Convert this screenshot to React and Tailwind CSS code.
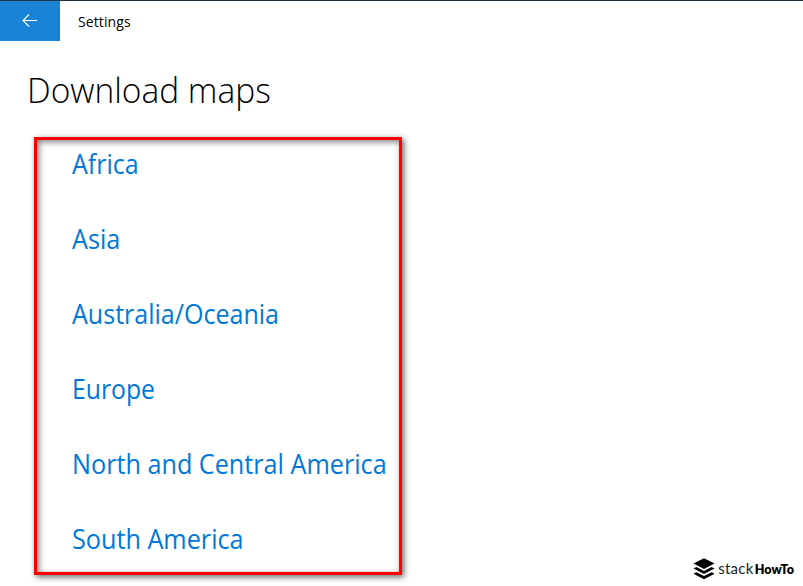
const regions = [
  { name: 'Africa', fit: 'scale-x-[0.943]' },
  { name: 'Asia', fit: 'scale-x-[0.950]' },
  { name: 'Australia/Oceania', fit: 'scale-x-[0.945]' },
  { name: 'Europe', fit: 'scale-x-[0.933]' },
  { name: 'North and Central America', fit: 'scale-x-[0.951]' },
  { name: 'South America', fit: 'scale-x-[0.951]' },
];

function BackArrow() {
  return (
    <svg width="16" height="14" viewBox="0 0 16 14" fill="none" stroke="white" strokeWidth="1.1">
      <path d="M15 6.500H1M7 0.500L1 6.500l6 6" />
    </svg>
  );
}

function StackLogo() {
  return (
    <svg width="22" height="22" viewBox="0 0 22 22" fill="black">
      <path d="M11 0.3L21.5 5.6 11 11 0.5 5.6z" />
      <path d="M0.5 10.6L3.4 9.1 11 13l7.600-3.900 2.900 1.500L11 16z" />
      <path d="M0.5 15.700L3.400 14.200 11 18.100l7.600-3.900 2.900 1.500L11 21.200z" />
    </svg>
  );
}

export default function App() {
  return (
    <div className="flex h-[586px] w-[803px] flex-col overflow-hidden border-t border-[#22303c] bg-white font-['Open_Sans',sans-serif] text-black">
      <header className="flex h-10 items-center">
        <button className="flex h-10 w-[60px] items-center justify-center bg-[#1883d7]" aria-label="Back">
          <BackArrow />
        </button>
        <span className="ml-[18px] whitespace-nowrap pt-[2px] text-[14px] leading-5 tracking-[0.1px]">Settings</span>
      </header>
      <h1 className="ml-[27px] mt-[25px] h-[48px] origin-left scale-x-[0.957] whitespace-nowrap text-[35px] font-light leading-[48px]">Download maps</h1>
      <div className="flex grow items-end justify-between">
        <ul className="mb-[11px] ml-[34px] h-[438px] w-[368px] border-[3px] border-[#ff0000] pl-[35px] shadow-[2px_2px_6px_rgba(0,0,0,0.6),inset_2px_2px_6px_rgba(0,0,0,0.5)]">
          {regions.map((region) => (
            <li key={region.name} className="h-[75px] whitespace-nowrap text-[26.500px] leading-[48px] text-[#0078d7]">
              <span className={`inline-block origin-left ${region.fit}`}>{region.name}</span>
            </li>
          ))}
        </ul>
        <div className="mb-[6px] mr-[9px] flex h-[22px] items-center whitespace-nowrap font-['Lato',sans-serif]">
          <StackLogo />
          <span className="ml-[3px] flex items-baseline">
            <span className="text-[15px] leading-[22px] tracking-[0.3px] text-[#222]">stack</span>
            <span className="ml-[1px] text-[12.500px] font-extrabold leading-[22px]">HowTo</span>
          </span>
        </div>
      </div>
    </div>
  );
}
